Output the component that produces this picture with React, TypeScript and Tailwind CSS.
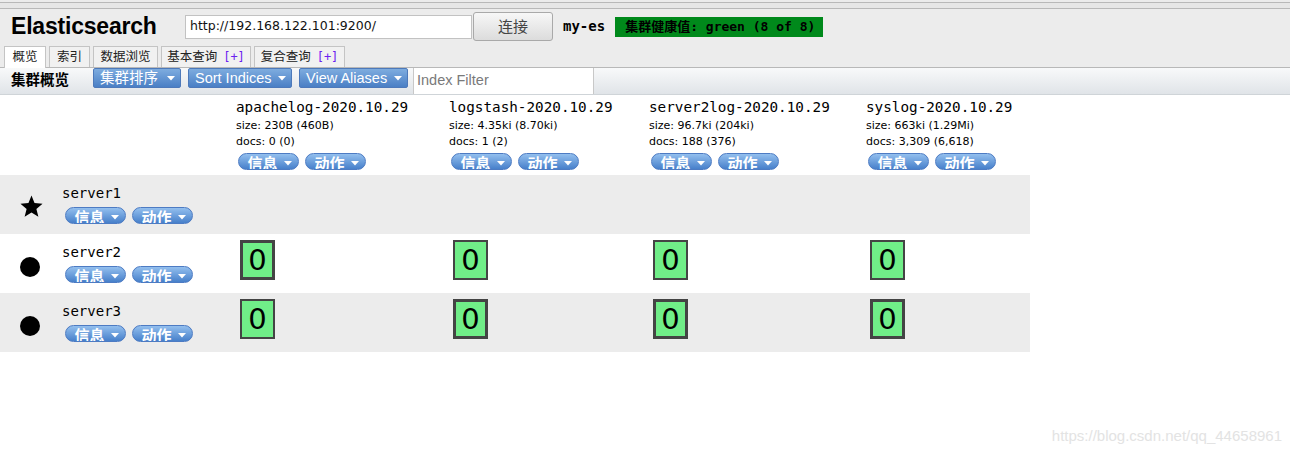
import React from "react"

type IndexInfo = {
  name: string
  size: string
  docs: string
}

type NodeInfo = {
  name: string
  master: boolean
  // one entry per index; true = primary shard (thick frame)
  shards: boolean[] | null
}

const indices: IndexInfo[] = [
  { name: "apachelog-2020.10.29", size: "230B (460B)", docs: "0 (0)" },
  { name: "logstash-2020.10.29", size: "4.35ki (8.70ki)", docs: "1 (2)" },
  { name: "server2log-2020.10.29", size: "96.7ki (204ki)", docs: "188 (376)" },
  { name: "syslog-2020.10.29", size: "663ki (1.29Mi)", docs: "3,309 (6,618)" },
]

const nodes: NodeInfo[] = [
  { name: "server1", master: true, shards: null },
  { name: "server2", master: false, shards: [true, false, false, false] },
  { name: "server3", master: false, shards: [false, true, true, true] },
]

const tabs = [
  { label: "概览", plus: false, w: "w-[42px]" },
  { label: "索引", plus: false, w: "w-[41px]" },
  { label: "数据浏览", plus: false, w: "w-[65px]" },
  { label: "基本查询", plus: true, w: "w-[90px]" },
  { label: "复合查询", plus: true, w: "w-[91px]" },
]

function Caret({ className = "" }: { className?: string }) {
  return (
    <svg width="8" height="5" viewBox="0 0 8 5" className={className}>
      <polygon points="0,0 8,0 4,4.5" fill="white" />
    </svg>
  )
}

// small rounded blue menu button (信息 / 动作)
function Pill({ label }: { label: string }) {
  return (
    <span className="flex h-[17px] w-[61px] items-start justify-center gap-[6px] overflow-hidden rounded-full border border-[#4d7bc3] bg-gradient-to-b from-[#93bfee] to-[#4780ca] pl-[2px]">
      <span className="text-[15px] font-bold leading-[20px] text-white">{label}</span>
      <Caret className="mt-[7px]" />
    </span>
  )
}

function ToolButton({ label, w }: { label: string; w: string }) {
  return (
    <span
      className={`flex h-[20px] ${w} items-center justify-between rounded-[2px] border border-[#4d79ba] bg-gradient-to-b from-[#7eacdf] to-[#4a7fc5] pl-[6px] pr-[5px] text-[14.5px] leading-[20px] text-white`}
    >
      <span>{label}</span>
      <Caret />
    </span>
  )
}

function Shard({ primary }: { primary: boolean }) {
  return (
    <div
      className={`flex h-[40px] w-[35px] items-center justify-center bg-[#70ee88] border-[#444444] ${
        primary ? "border-[3px]" : "border-[2px]"
      }`}
    >
      <span className="font-['DejaVu_Sans',sans-serif] text-[29px] leading-none text-black">0</span>
    </div>
  )
}

const cols = "grid w-[1030px] grid-cols-[236px_213px_200px_217px_164px]"

export default function App() {
  return (
    <div className="relative h-[453px] w-full overflow-hidden bg-white font-['Liberation_Sans','Noto_Sans_CJK_SC',sans-serif] text-black">
      {/* browser chrome edge */}
      <div className="h-[2px] bg-[#ebebeb]" />
      <div className="h-[7px] border-y border-[#b8b8b8] bg-[#e6e6e6]" />

      {/* header */}
      <div className="bg-[#ececec] pt-[3px]">
        <div className="flex h-[29px] items-center pl-[11px]">
          <div className="w-[174px] text-[23px] font-bold leading-none tracking-[-0.2px]">Elasticsearch</div>
          <div className="flex h-[24px] w-[287px] items-center border border-[#c2c2c2] bg-white pl-[4px] font-['DejaVu_Sans',sans-serif] text-[12.5px] text-[#111]">
            http://192.168.122.101:9200/
          </div>
          <button className="ml-[1px] h-[29px] w-[80px] rounded-[3px] border border-[#a9a9a9] bg-gradient-to-b from-[#f7f7f7] to-[#dcdcdc] font-['Noto_Sans_CJK_SC',sans-serif] text-[15px] text-[#444]">
            连接
          </button>
          <span className="ml-[10px] font-['DejaVu_Sans_Mono',monospace] text-[14px] font-bold">my-es</span>
          <span className="ml-[10px] flex h-[20px] w-[208px] items-center bg-[#00891b] pl-[10px] font-['DejaVu_Sans_Mono','Noto_Sans_CJK_SC',monospace] text-[13px] font-bold text-black">
            集群健康值: green (8 of 8)
          </span>
        </div>

        {/* tabs */}
        <div className="mt-[5px] flex items-end gap-[3px] pl-[4px] font-['Liberation_Sans','Noto_Sans_CJK_SC',sans-serif] text-[12.5px] text-[#222]">
          {tabs.map((t, i) => (
            <div
              key={t.label}
              className={`${t.w} flex items-center justify-center gap-[6px] border border-b-0 border-[#c4c4c4] ${
                i === 0 ? "relative z-10 -mb-px h-[22px] bg-white" : "h-[21px] bg-[#f1f1f1]"
              }`}
            >
              <span>{t.label}</span>
              {t.plus && <span className="font-['DejaVu_Sans_Mono',monospace] text-[12px] text-[#6b21f0]">[+]</span>}
            </div>
          ))}
        </div>
      </div>

      {/* toolbar */}
      <div className="flex h-[28px] items-stretch border-y border-t-[#b8b8b8] border-b-[#cfd4d8] bg-gradient-to-b from-[#f8f9fa] to-[#e0e4e8]">
        <div className="flex w-[93px] items-center pl-[11px] text-[14.5px] font-bold">集群概览</div>
        <div className="flex items-start gap-[7px]">
          <ToolButton label="集群排序" w="w-[88px]" />
          <ToolButton label="Sort Indices" w="w-[104px]" />
          <ToolButton label="View Aliases" w="w-[109px]" />
        </div>
        <div className="ml-[5px] flex w-[181px] items-center border-x border-[#c8c8c8] bg-white pl-[3px] text-[14.5px] text-[#7a7a7a]">
          Index Filter
        </div>
      </div>

      {/* index header row */}
      <div className={`${cols} h-[80px]`}>
        <div />
        {indices.map((idx) => (
          <div key={idx.name} className="pt-[3px]">
            <div className="font-['DejaVu_Sans_Mono',monospace] text-[14.3px] leading-[18px]">{idx.name}</div>
            <div className="mt-[2px] font-['DejaVu_Sans',sans-serif] text-[11px] leading-[16px]">size: {idx.size}</div>
            <div className="font-['DejaVu_Sans',sans-serif] text-[11px] leading-[16px]">docs: {idx.docs}</div>
            <div className="ml-[2px] mt-[3px] flex gap-[6px]">
              <Pill label="信息" />
              <Pill label="动作" />
            </div>
          </div>
        ))}
      </div>

      {/* node rows */}
      {nodes.map((node, r) => (
        <div key={node.name} className={`${cols} h-[59px] ${r % 2 === 0 ? "bg-[#ececec]" : "bg-white"}`}>
          <div className="flex items-center">
            <div className="flex w-[62px] pl-[19px]">
              {node.master ? (
                <svg width="25" height="25" viewBox="0 0 24 24" className="mt-[3px]">
                  <polygon
                    points="12,1.5 14.9,8.7 22.6,9.3 16.7,14.3 18.6,21.9 12,17.8 5.4,21.9 7.3,14.3 1.4,9.3 9.1,8.7"
                    fill="black"
                  />
                </svg>
              ) : (
                <div className="ml-px mt-[6px] h-[20px] w-[20px] rounded-full bg-black" />
              )}
            </div>
            <div className="flex flex-col">
              <div className="font-['DejaVu_Sans_Mono',monospace] text-[14px] leading-[16px]">{node.name}</div>
              <div className="ml-[3px] mt-[6px] flex gap-[6px]">
                <Pill label="信息" />
                <Pill label="动作" />
              </div>
            </div>
          </div>
          {indices.map((idx, c) => (
            <div key={idx.name} className="pl-[4px] pt-[6px]">
              {node.shards && <Shard primary={node.shards[c]} />}
            </div>
          ))}
        </div>
      ))}

      {/* blog watermark */}
      <div className="absolute right-[8px] top-[425px] text-[15px] text-[#e3e3e3]">
        https://blog.csdn.net/qq_44658961
      </div>
    </div>
  )
}
